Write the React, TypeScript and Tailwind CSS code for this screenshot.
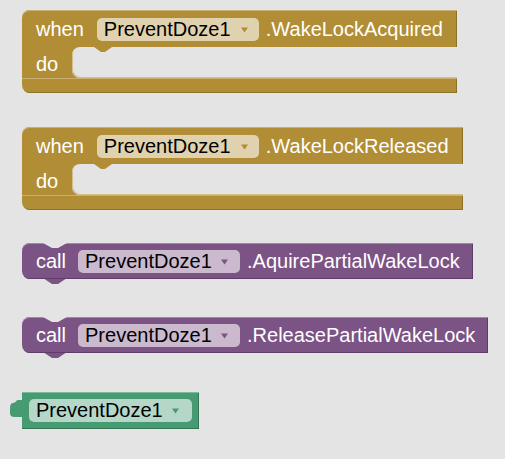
import React from 'react';

function Arrow({ color }: { color: string }) {
  return (
    <svg width="7" height="6" viewBox="0 0 7 6" className="shrink-0">
      <path d="M0 0.5 H7 L3.5 5.5 Z" fill={color} />
    </svg>
  );
}

function Field({ className, arrow }: { className: string; arrow: string }) {
  return (
    <div className={`flex h-[23px] shrink-0 items-center justify-between rounded-[5px] pl-[7px] text-black ${className}`}>
      <span className="leading-[23px]">PreventDoze1</span>
      <Arrow color={arrow} />
    </div>
  );
}

function EventBlock({ name, className }: { name: string; className: string }) {
  return (
    <div className={`flex w-fit flex-col ${className}`}>
      {/* header row */}
      <div className="flex h-[37px] items-center rounded-tl-[8px] bg-[#b18e35] pl-[14px] pr-[14px] pt-[2px] shadow-[inset_0_1px_0_#c8b072,inset_-1px_0_0_#8d7129]">
        <span className="leading-[23px] text-white">when</span>
        <Field className="ml-[13px] w-[162px] bg-[#e0d2ae] pr-[11px]" arrow="#b18e35" />
        <span className="ml-[7px] leading-[23px] text-white">{name}</span>
      </div>
      {/* statement slot */}
      <div className="flex h-[31px] bg-[#b18e35]">
        <div className="w-[50px] pl-[14px] pt-[6px] leading-[23px] text-white">do</div>
        <div className="relative flex-1 rounded-l-[8px] bg-[#e4e4e4] shadow-[inset_1px_-1px_0_#d2bf8c]">
          <svg width="18" height="6" viewBox="0 0 18 6" className="absolute left-[22px] top-0">
            <path d="M0 0 L7 5 L11 5 L18 0 Z" fill="#b18e35" />
          </svg>
        </div>
      </div>
      <div className="h-[15px] rounded-bl-[8px] bg-[#b18e35] shadow-[inset_0_1px_0_#c8b072,inset_-1px_-1px_0_#8d7129]" />
    </div>
  );
}

function CallBlock({ name, className }: { name: string; className: string }) {
  return (
    <div className={`relative flex h-[36px] w-fit items-center rounded-l-[8px] bg-[#7c5385] pl-[14px] pr-[13px] pt-[1px] shadow-[inset_0_1px_0_#a387aa,inset_-1px_-1px_0_#5d3e64] ${className}`}>
      <svg width="24" height="6" viewBox="0 0 24 6" className="absolute left-[21px] top-0">
        <path d="M0 0 L9 5 L15 5 L24 0 Z" fill="#e4e4e4" />
      </svg>
      <span className="leading-[23px] text-white">call</span>
      <Field className="ml-[12px] w-[162px] bg-[#cbbace] pr-[12px]" arrow="#7c5385" />
      <span className="ml-[7px] leading-[23px] text-white">{name}</span>
      <svg width="24" height="6" viewBox="0 0 24 6" className="absolute left-[21px] top-full">
        <path d="M0 -1 L24 -1 L15 5 L9 5 Z" fill="#7c5385" />
      </svg>
    </div>
  );
}

function ComponentBlock({ className }: { className: string }) {
  return (
    <div className={`relative flex h-[37px] w-fit items-center bg-[#479b72] pl-[7px] pr-[7px] shadow-[inset_0_1px_0_#7dba9c,inset_-1px_-1px_0_#347552] ${className}`}>
      <svg width="13" height="17" viewBox="0 0 13 17" className="absolute left-[-12px] top-[8px]">
        <path d="M13 0 L8 0 C6 0 6 3 3 3 C1 3 0 5 0 8 L0 13 C0 16 2 17 5 17 L13 17 Z" fill="#479b72" />
      </svg>
      <Field className="w-[163px] bg-[#b5d7c7] pr-[13px]" arrow="#479b72" />
    </div>
  );
}

export default function App() {
  return (
    <div className="flex min-h-[459px] w-full flex-col bg-[#e4e4e4] pl-[22px] pt-[10px] font-['Liberation_Sans',Arial,sans-serif] text-[20px]">
      <EventBlock name=".WakeLockAcquired" className="" />
      <EventBlock name=".WakeLockReleased" className="mt-[34px]" />
      <CallBlock name=".AquirePartialWakeLock" className="mt-[33px]" />
      <CallBlock name=".ReleasePartialWakeLock" className="mt-[38px]" />
      <ComponentBlock className="mt-[39px]" />
    </div>
  );
}
